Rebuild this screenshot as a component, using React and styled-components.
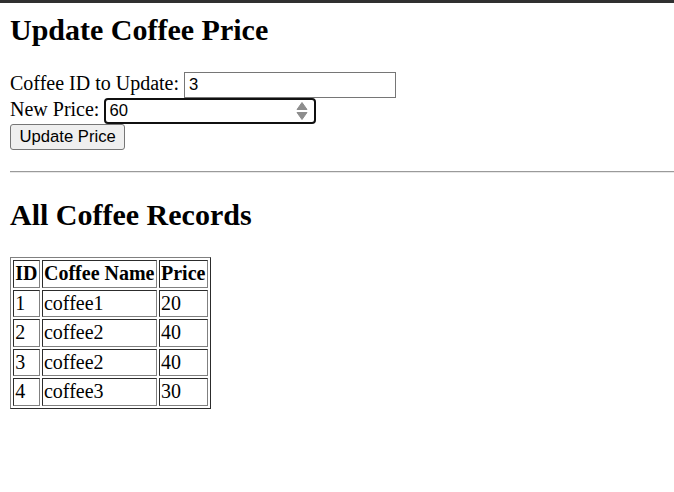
import React from "react";
import styled, { createGlobalStyle } from "styled-components";

const Global = createGlobalStyle`
  html, body { margin: 0; padding: 0; background: #fff; }
  body {
    font-family: "Liberation Serif", "Times New Roman", serif;
    font-size: 20px;
    color: #000;
  }
`;

const TopBar = styled.div`
  height: 3px;
  background: #303030;
`;

const Page = styled.main`
  padding: 10px 0 0 10px;
`;

const Heading = styled.h2`
  font-size: 30px;
  font-weight: bold;
  margin: ${(p) => (p.$first ? "0" : "25px")} 0 25px;
`;

const Form = styled.form`
  margin: 0 0 21px;
`;

const Row = styled.div`
  display: block;
`;

const TextInput = styled.input`
  box-sizing: border-box;
  width: 212px;
  height: 25.6px;
  padding: 2px 4px;
  border: 1px solid #767676;
  border-radius: 0;
  font-family: "Liberation Sans", Arial, sans-serif;
  font-size: 16.67px;
  line-height: 19.6px;
  color: #000;
  background: #fff;
  vertical-align: baseline;
  outline: none;
`;

const NumberWrap = styled.span`
  position: relative;
  display: inline-block;
  vertical-align: baseline;
`;

const NumberInput = styled(TextInput)`
  border: 2px solid #101010;
  border-radius: 4px;
  padding: 1px 3px;
  appearance: textfield;
  -moz-appearance: textfield;
  &::-webkit-inner-spin-button,
  &::-webkit-outer-spin-button {
    -webkit-appearance: none;
    margin: 0;
  }
`;

const Spinner = styled.svg`
  position: absolute;
  right: 8px;
  top: 3px;
  width: 12px;
  height: 20px;
  pointer-events: none;
`;

const Button = styled.button`
  display: inline-block;
  box-sizing: border-box;
  height: 26.5px;
  padding: 2.5px 8.5px;
  border: 1px solid #767676;
  border-radius: 3px;
  background: #efefef;
  font-family: "Liberation Sans", Arial, sans-serif;
  font-size: 16.67px;
  line-height: 19.5px;
  color: #000;
  vertical-align: baseline;
`;

const Rule = styled.hr`
  height: 0;
  margin: 0;
  border: 0;
  border-top: 1.25px solid #9a9a9a;
  border-bottom: 1.25px solid #e8e8e8;
`;

const Table = styled.table`
  border: 1px outset #808080;
  border-spacing: 2.5px;
  border-collapse: separate;
`;

const Th = styled.th`
  border: 1px inset #808080;
  padding: 1.25px;
  font-weight: bold;
  text-align: center;
  line-height: 23px;
`;

const Td = styled.td`
  border: 1px inset #808080;
  padding: 1.25px;
  text-align: left;
  line-height: 23px;
`;

const coffees = [
  { id: 1, name: "coffee1", price: 20 },
  { id: 2, name: "coffee2", price: 40 },
  { id: 3, name: "coffee2", price: 40 },
  { id: 4, name: "coffee3", price: 30 },
];

export default function App() {
  return (
    <>
      <Global />
      <TopBar />
      <Page>
        <Heading $first>Update Coffee Price</Heading>
        <Form onSubmit={(e) => e.preventDefault()}>
          <Row>
            Coffee ID to Update: <TextInput type="text" defaultValue="3" />
          </Row>
          <Row>
            New Price:{" "}
            <NumberWrap>
              <NumberInput type="number" defaultValue="60" />
              <Spinner viewBox="0 0 12 20">
                <path d="M6 1.5 L11 8.5 L1 8.5 Z" fill="#8d8d8d" stroke="#8d8d8d" strokeWidth="1" strokeLinejoin="round" />
                <path d="M1 11.5 L11 11.5 L6 18.5 Z" fill="#8d8d8d" stroke="#8d8d8d" strokeWidth="1" strokeLinejoin="round" />
              </Spinner>
            </NumberWrap>
          </Row>
          <Row>
            <Button type="submit">Update Price</Button>
          </Row>
        </Form>
        <Rule />
        <Heading>All Coffee Records</Heading>
        <Table>
          <thead>
            <tr>
              <Th>ID</Th>
              <Th>Coffee Name</Th>
              <Th>Price</Th>
            </tr>
          </thead>
          <tbody>
            {coffees.map((c) => (
              <tr key={c.id}>
                <Td>{c.id}</Td>
                <Td>{c.name}</Td>
                <Td>{c.price}</Td>
              </tr>
            ))}
          </tbody>
        </Table>
      </Page>
    </>
  );
}
